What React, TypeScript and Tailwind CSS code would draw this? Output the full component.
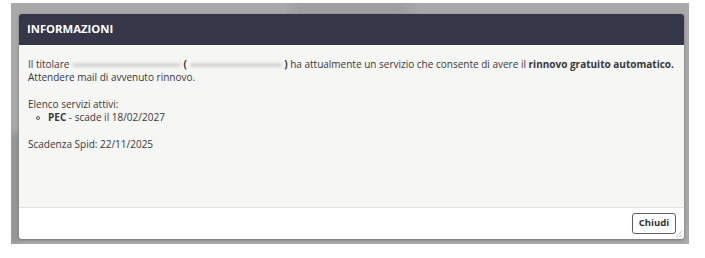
import { FC } from 'react'

const Blur: FC<{ width: string }> = ({ width }) => (
  <span className={`inline-block align-middle h-[4px] rounded-full bg-[#d4d4d4] blur-[1.5px] ${width}`} />
)

const App: FC = () => {
  return (
    <div className="w-[705px] h-[258px] bg-white pt-[3px] pl-[11px] font-['Open_Sans',sans-serif]">
      {/* backdrop */}
      <div className="relative w-[678px] h-[241px] bg-[#a9a9a9] pt-[11px] pl-[8px] overflow-hidden">
        <div className="absolute left-[280px] top-[0px] w-[120px] h-[12px] bg-[#9a9a9a] blur-[6px]" />
        <div className="absolute left-0 top-[130px] w-[8px] h-[110px] bg-[#8f8f8f] blur-[3px]" />

        {/* dialog */}
        <div className="relative flex flex-col w-[665px] h-[225px] rounded-[3px] shadow-[0_1px_3px_rgba(0,0,0,0.35)] overflow-hidden">
          {/* Header */}
          <div className="flex items-center h-[31px] bg-[#363649] px-[8px]">
            <h2 className="text-white font-bold text-[11.3px]">INFORMAZIONI</h2>
          </div>

          {/* Body */}
          <div className="flex-1 bg-[#f6f6f4] px-[9px] pt-[13px] text-[10px] leading-[13px] text-[#383838]">
            <p>
              Il titolare <Blur width="w-[109px]" /> <b className="font-bold">(</b> <Blur width="w-[92px]" />{' '}
              <b className="font-bold">)</b> ha attualmente un servizio che consente di avere il{' '}
              <b className="font-bold">rinnovo gratuito automatico.</b>
              <br />
              Attendere mail di avvenuto rinnovo.
            </p>

            <p className="mt-[14px]">Elenco servizi attivi:</p>
            <ul className="pl-[8px]">
              <li className="flex items-center gap-[8px]">
                <span className="inline-block w-[4px] h-[4px] rounded-full border border-[#555]" />
                <span>
                  <b className="font-bold">PEC</b> - scade il 18/02/2027
                </span>
              </li>
            </ul>

            <p className="mt-[14px]">Scadenza Spid: 22/11/2025</p>
          </div>

          {/* Footer */}
          <div className="relative flex items-center justify-end h-[32px] bg-white border-t border-[#e2e2e2] pr-[8px]">
            <button className="h-[21px] w-[44px] rounded-[3px] border border-[#5b5b6b] bg-white text-[9.5px] font-bold text-[#333]">
              Chiudi
            </button>
            <svg className="absolute right-[1px] bottom-[1px]" width="8" height="8" viewBox="0 0 8 8">
              <path d="M7 1 L1 7 M7 4 L4 7 M7 6.5 L6.5 7" stroke="#b5b5b5" strokeWidth="0.8" />
            </svg>
          </div>
        </div>
      </div>
    </div>
  )
}

export default App
